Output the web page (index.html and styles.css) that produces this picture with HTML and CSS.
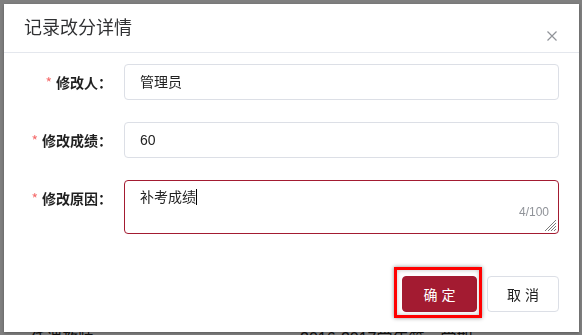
FILE: index.html
```html
<!DOCTYPE html>
<html lang="zh-CN">
<head>
<meta charset="utf-8">
<title>记录改分详情</title>
<link rel="stylesheet" href="styles.css">
</head>
<body>
<div class="page">
  <div class="page-row">
    <span class="page-cell first">任课教师</span>
    <span class="page-cell second">2016-2017学年第一学期</span>
  </div>
</div>
<div class="mask">
  <div class="dialog">
    <div class="dialog-header">
      <span class="dialog-title">记录改分详情</span>
      <svg class="close" width="10" height="10" viewBox="0 0 10 10"><path d="M0.5 0.5L9.5 9.5M9.5 0.5L0.5 9.5" stroke="#909399" stroke-width="1.2" fill="none"/></svg>
    </div>
    <div class="dialog-body">
      <div class="form-item">
        <label class="form-label"><span class="star">*</span>修改人：</label>
        <div class="input">管理员</div>
      </div>
      <div class="form-item">
        <label class="form-label"><span class="star">*</span>修改成绩：</label>
        <div class="input">60</div>
      </div>
      <div class="form-item">
        <label class="form-label"><span class="star">*</span>修改原因：</label>
        <div class="textarea">
          <span class="ta-text">补考成绩</span><span class="caret"></span>
          <span class="count">4/100</span>
          <svg class="resize" width="12" height="12" viewBox="0 0 12 12"><path d="M11 3L3 11M11 6L6 11M11 9L9 11M11 0L0 11" stroke="#7a7a7a" stroke-width="1" fill="none"/></svg>
        </div>
      </div>
    </div>
    <div class="dialog-footer">
      <div class="btn-wrap">
        <button class="btn primary">确 定</button>
        <span class="highlight"></span>
      </div>
      <button class="btn plain">取 消</button>
    </div>
  </div>
</div>
</body>
</html>
```
FILE: styles.css
```css
* { box-sizing: border-box; }
html, body { margin: 0; padding: 0; }
body {
  width: 582px;
  height: 335px;
  overflow: hidden;
  background: #fff;
  font-family: "Liberation Sans", "Noto Sans CJK SC", sans-serif;
  color: #303133;
}
.page { padding-top: 329px; }
.page-row { display: flex; font-size: 16px; line-height: 20px; color: #222; }
.page-cell.first { margin-left: 30px; width: 270px; }
.page-cell.second { }

.mask {
  position: fixed;
  inset: 0;
  background: rgba(0, 0, 0, 0.5);
  padding: 4px 3px 3px 4px;
}
.dialog {
  width: 575px;
  height: 328px;
  background: #fff;
  box-shadow: 0 1px 3px rgba(0,0,0,.3);
  display: flex;
  flex-direction: column;
}
.dialog-header {
  display: flex;
  align-items: center;
  justify-content: space-between;
  padding: 14px 22px 10px 20px;
  height: 49px;
  border-bottom: 1px solid #e4e7ed;
}
.dialog-title {
  font-family: "Noto Sans CJK SC", sans-serif;
  font-size: 18px;
  line-height: 24px;
  color: #303133;
  margin-top: -8px;
}
.close { display: block; margin-top: 12px; }

.dialog-body {
  padding: 11px 20px 0 0;
  display: flex;
  flex-direction: column;
  gap: 22px;
}
.form-item { display: flex; align-items: flex-start; }
.form-label {
  width: 120px;
  padding-right: 12px;
  text-align: right;
  font-family: "Noto Sans CJK SC", sans-serif;
  font-weight: 700;
  font-size: 14px;
  line-height: 36px;
  color: #1f1f1f;
}
.star { color: #f56c6c; margin-right: 4px; font-weight: 400; }
.input {
  flex: 1;
  height: 36px;
  border: 1px solid #dcdfe6;
  border-radius: 4px;
  padding: 0 15px;
  font-size: 14px;
  line-height: 34px;
  color: #222;
}
.textarea {
  flex: 1;
  height: 54px;
  border: 1px solid #a31b31;
  border-radius: 4px;
  padding: 5px 15px;
  font-size: 14px;
  line-height: 20px;
  color: #222;
  position: relative;
}
.ta-text { font-family: "Noto Sans CJK SC", sans-serif; }
.caret {
  display: inline-block;
  width: 1px;
  height: 16px;
  background: #000;
  vertical-align: -3px;
}
.count {
  position: absolute;
  right: 9px;
  top: 23px;
  font-size: 12px;
  line-height: 16px;
  color: #909399;
}
.resize {
  position: absolute;
  right: 1px;
  bottom: 1px;
}

.dialog-footer {
  margin-top: auto;
  padding: 0 20px 20px 0;
  display: flex;
  justify-content: flex-end;
  align-items: center;
  gap: 10px;
}
.btn-wrap { position: relative; }
.btn {
  display: block;
  height: 36px;
  border-radius: 4px;
  font-family: "Liberation Sans", "Noto Sans CJK SC", sans-serif;
  font-size: 14px;
  padding: 0;
  cursor: pointer;
}
.btn.primary {
  width: 75px;
  background: #a31b31;
  border: 1px solid #a31b31;
  color: #fff;
}
.btn.plain {
  width: 72px;
  background: #fff;
  border: 1px solid #dcdfe6;
  color: #222;
}
.highlight {
  position: absolute;
  left: -8px;
  top: -9px;
  width: 88px;
  height: 51px;
  border: 3px solid #ff0000;
  box-shadow: 0 0 4px rgba(0,0,0,.45), inset 0 0 4px rgba(0,0,0,.25);
}
```
